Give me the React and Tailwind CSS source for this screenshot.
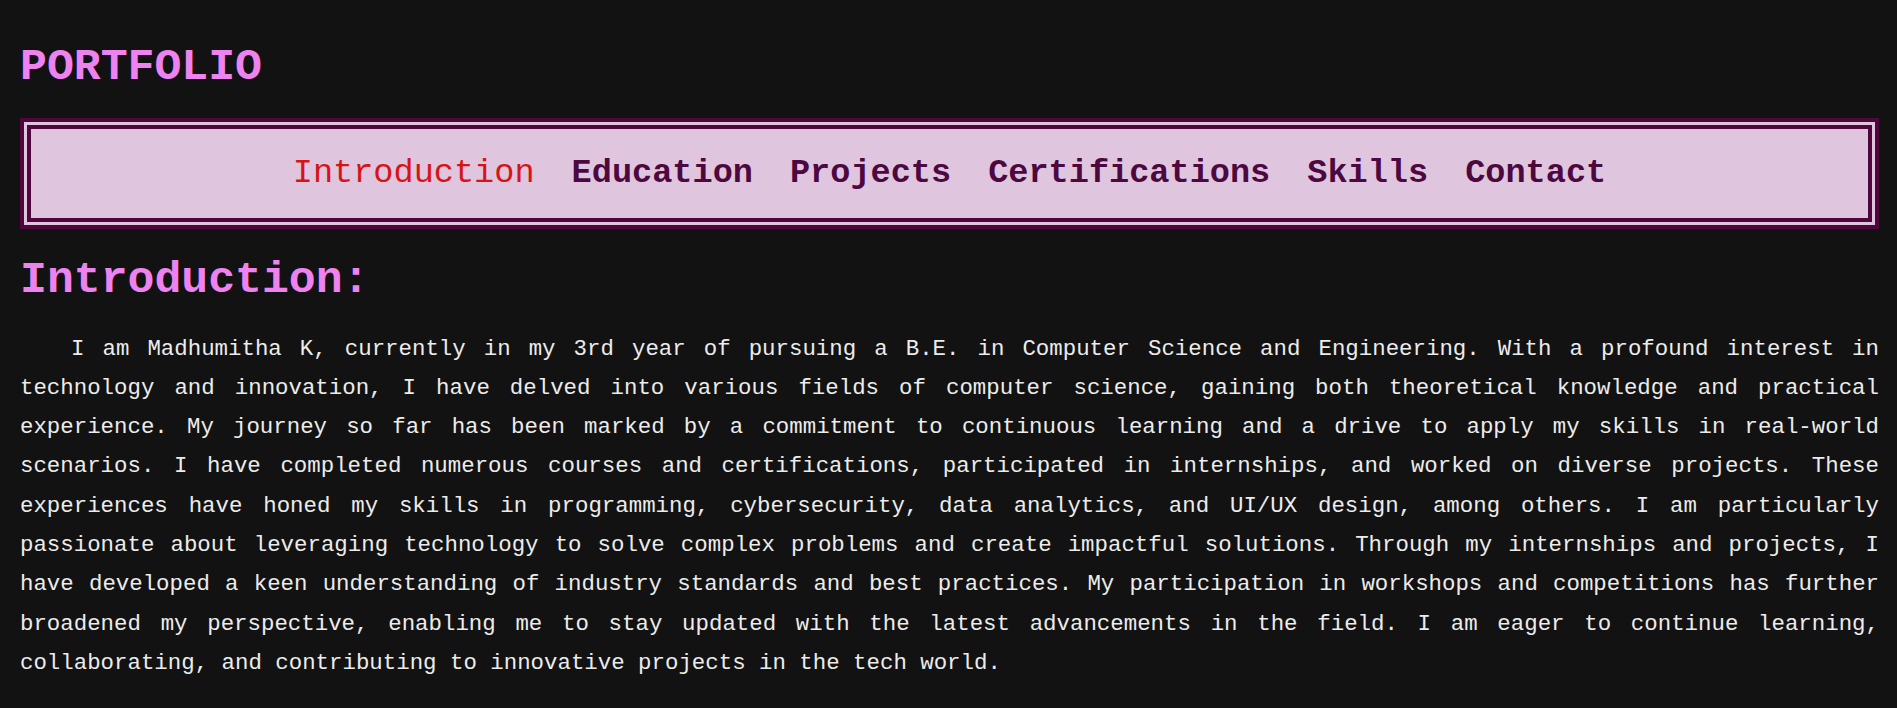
export default function App() {
  const links = ["Introduction", "Education", "Projects", "Certifications", "Skills", "Contact"];
  return (
    <div className="min-h-[708px] bg-[#121212] pl-[20px] pr-[18px] pb-[20px] font-['Liberation_Mono','Courier_New',monospace]">
      <h1 className="pt-[42px] text-[44.8px] font-bold leading-[50px] text-[#ee82ee]">PORTFOLIO</h1>
      <nav className="mt-[26px] border-[11px] border-double border-[#4f063c] bg-[#e0c5df] py-[24px]">
        <ul className="flex justify-center gap-[37px] text-[33.6px] leading-[41px]">
          {links.map((l, i) => (
            <li key={l} className={i === 0 ? "font-normal text-[#d71414]" : "font-bold text-[#4d0840]"}>
              {l}
            </li>
          ))}
        </ul>
      </nav>
      <h2 className="mt-[26px] text-[44.8px] font-bold leading-[50px] text-[#ee82ee]">Introduction:</h2>
      <p className="mt-[24.5px] indent-[51px] text-justify text-[22.4px] leading-[39.3px] text-[#ececec]">
        I am Madhumitha K, currently in my 3rd year of pursuing a B.E. in Computer Science and Engineering. With a profound interest in technology and innovation, I have delved into various fields of computer science, gaining both theoretical knowledge and practical experience. My journey so far has been marked by a commitment to continuous learning and a drive to apply my skills in real-world scenarios. I have completed numerous courses and certifications, participated in internships, and worked on diverse projects. These experiences have honed my skills in programming, cybersecurity, data analytics, and UI/UX design, among others. I am particularly passionate about leveraging technology to solve complex problems and create impactful solutions. Through my internships and projects, I have developed a keen understanding of industry standards and best practices. My participation in workshops and competitions has further broadened my perspective, enabling me to stay updated with the latest advancements in the field. I am eager to continue learning, collaborating, and contributing to innovative projects in the tech world.
      </p>
    </div>
  );
}
